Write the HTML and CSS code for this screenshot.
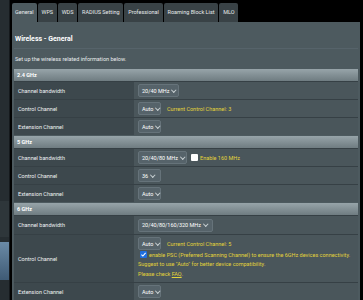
FILE: index.html
```html
<!DOCTYPE html>
<html lang="en">
<head>
  <meta charset="UTF-8">
  <title>Wireless - General</title>
  <link rel="stylesheet" href="styles.css">
</head>
<body>
  <div class="page">
    <aside class="sidebar">
      <div class="menu-item"></div>
      <div class="menu-item active"></div>
    </aside>

    <main class="main">
      <nav class="tabs">
        <span class="tab active">General</span>
        <span class="tab">WPS</span>
        <span class="tab">WDS</span>
        <span class="tab">RADIUS Setting</span>
        <span class="tab">Professional</span>
        <span class="tab">Roaming Block List</span>
        <span class="tab">MLO</span>
      </nav>

      <section class="panel">
        <h1 class="title">Wireless - General</h1>
        <div class="split-line"></div>
        <p class="desc">Set up the wireless related information below.</p>

        <div class="band">
          <div class="band-head">2.4 GHz</div>
          <div class="row">
            <div class="label">Channel bandwidth</div>
            <div class="value"><span class="select w-41">20/40 MHz<i class="chev"></i></span></div>
          </div>
          <div class="row">
            <div class="label">Control Channel</div>
            <div class="value"><span class="select w-23">Auto<i class="chev"></i></span><span class="hint">Current Control Channel: 3</span></div>
          </div>
          <div class="row">
            <div class="label">Extension Channel</div>
            <div class="value"><span class="select w-23">Auto<i class="chev"></i></span></div>
          </div>
        </div>

        <div class="band">
          <div class="band-head">5 GHz</div>
          <div class="row">
            <div class="label">Channel bandwidth</div>
            <div class="value">
              <span class="select w-49">20/40/80 MHz<i class="chev"></i></span>
              <span class="check"></span><span class="hint tight">Enable 160 MHz</span>
            </div>
          </div>
          <div class="row">
            <div class="label">Control Channel</div>
            <div class="value"><span class="select w-23">36<i class="chev"></i></span></div>
          </div>
          <div class="row">
            <div class="label">Extension Channel</div>
            <div class="value"><span class="select w-23">Auto<i class="chev"></i></span></div>
          </div>
        </div>

        <div class="band">
          <div class="band-head">6 GHz</div>
          <div class="row wide">
            <div class="label">Channel bandwidth</div>
            <div class="value"><span class="select w-75">20/40/80/160/320 MHz<i class="chev"></i></span></div>
          </div>
          <div class="row tall">
            <div class="label">Control Channel</div>
            <div class="value stack">
              <div class="line first"><span class="select w-23">Auto<i class="chev"></i></span><span class="hint">Current Control Channel: 5</span></div>
              <div class="line">
                <span class="check checked">
                  <svg viewBox="0 0 8 8" width="7" height="7"><path d="M1.6 4.2 L3.3 5.8 L6.4 2.2" fill="none" stroke="#fff" stroke-width="1.2"/></svg>
                </span>
                <span class="hint tight">enable PSC (Preferred Scanning Channel) to ensure the 6GHz devices connectivity.</span>
              </div>
              <div class="hint-line">Suggest to use "Auto" for better device compatibility.</div>
              <div class="hint-line">Please check <u>FAQ</u>.</div>
            </div>
          </div>
          <div class="row">
            <div class="label">Extension Channel</div>
            <div class="value"><span class="select w-23">Auto<i class="chev"></i></span></div>
          </div>
        </div>
      </section>
    </main>
  </div>
</body>
</html>
```

FILE: styles.css
```css
:root {
  --panel: #4d5a5f;
  --label-bg: #3d484d;
  --value-bg: #4a565b;
  --row-line: #364045;
  --hint: #e2d33a;
  --tab-off: #394246;
}

body {
  margin: 0;
  background: #000;
  font-family: Roboto, "Liberation Sans", sans-serif;
  font-size: 5.5px;
  color: #fff;
  overflow: hidden;
}

.page {
  display: flex;
  height: 300px;
}

.sidebar {
  width: 9px;
  margin-right: 2px;
  background: #262d31;
  border-right: 1px solid #15191c;
  display: flex;
  flex-direction: column;
  padding-top: 6px;
}

.menu-item {
  height: 36px;
  margin-top: 195px;
  background: #2e363a;
}

.menu-item.active {
  margin-top: 5px;
  height: 38px;
  background: linear-gradient(#6a8aa6, #3f5b75);
}

.main {
  width: 348px;
  display: flex;
  flex-direction: column;
}

/* tabs */
.tabs {
  display: flex;
  gap: 1px;
  padding-top: 3px;
  height: 19px;
}

.tab {
  background: var(--tab-off);
  border-radius: 2px 2px 0 0;
  padding: 0 3.8px;
  line-height: 19px;
  color: #e6eaeb;
  white-space: nowrap;
}

.tab.active {
  background: var(--panel);
  padding: 0 3px;
}

/* panel */
.panel {
  flex: 1;
  background: var(--panel);
  padding: 0 2px;
}

.title {
  margin: 0;
  padding: 13px 0 0 1px;
  font-size: 7px;
  font-weight: bold;
  line-height: 8px;
}

.split-line {
  height: 1px;
  margin: 5px 0 0;
  background: #56636a;
}

.desc {
  margin: 0 0 6px;
  padding: 6px 0 0 1px;
  line-height: 8px;
  color: #e9eced;
}

.band {
  margin-bottom: 1px;
}

.band-head {
  height: 12px;
  line-height: 12px;
  padding-left: 3px;
  font-weight: bold;
  background: linear-gradient(#97a4a9, #6f7c81);
}

.row {
  display: flex;
  height: 17px;
  border-top: 1px solid var(--row-line);
}

.row.wide {
  height: 18px;
}

.row.tall {
  height: 47px;
}

.label {
  width: 116px;
  padding-left: 4px;
  background: var(--label-bg);
  display: flex;
  align-items: center;
  color: #eef1f2;
}

.value {
  flex: 1;
  background: var(--value-bg);
  display: flex;
  align-items: center;
  padding-left: 4px;
}

.value.stack {
  display: block;
  padding-top: 2px;
}

.line {
  display: flex;
  align-items: center;
  height: 9px;
}

.line.first {
  height: 13px;
}

.hint-line {
  color: var(--hint);
  line-height: 10px;
  white-space: nowrap;
}

.select {
  box-sizing: border-box;
  height: 13px;
  display: inline-flex;
  align-items: center;
  padding-left: 3px;
  background: #56636a;
  border: 1px solid #66737a;
  border-radius: 2px;
  color: #fff;
  white-space: nowrap;
}

.w-23 { width: 23px; }
.w-41 { width: 41px; }
.w-49 { width: 49px; }
.w-75 { width: 75px; }

.chev {
  width: 2.5px;
  height: 2.5px;
  margin-left: 3px;
  margin-top: -2px;
  border-right: 0.6px solid #c9d0d3;
  border-bottom: 0.6px solid #c9d0d3;
  transform: rotate(45deg);
}

.hint {
  color: var(--hint);
  margin-left: 6px;
  white-space: nowrap;
}

.hint.tight {
  margin-left: 2px;
}

.check {
  width: 7px;
  height: 7px;
  margin-left: 4px;
  background: #fff;
  border-radius: 1px;
  display: inline-flex;
}

.check.checked {
  margin-left: 2px;
  background: #1e6fe0;
}
```
